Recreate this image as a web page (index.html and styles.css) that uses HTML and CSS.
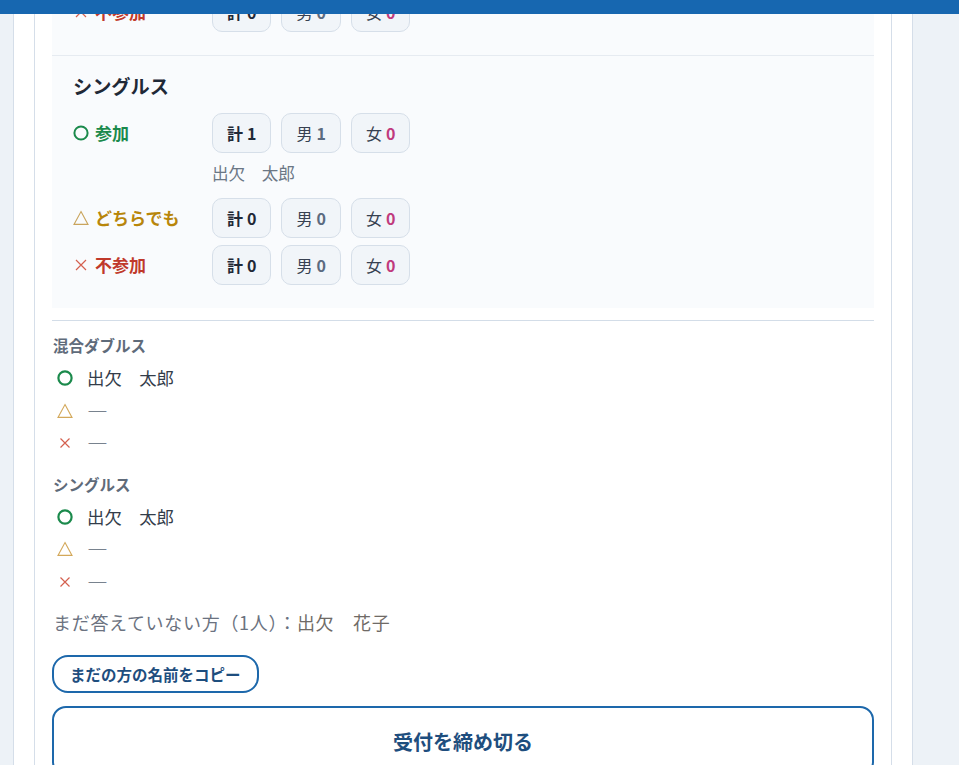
FILE: index.html
```html
<!DOCTYPE html>
<html lang="ja">
<head>
    <meta charset="UTF-8">
    <meta name="viewport" content="width=device-width, initial-scale=1.0">
    <title>出欠集計</title>
    <link rel="stylesheet" href="styles.css">
</head>
<body>
    <div class="top-bar"></div>

    <div class="page">
        <div class="card">
            <div class="tally">
                <!-- 混合ダブルス -->
                <div class="tally-section">
                    <h3 class="tally-title">混合ダブルス</h3>
                    <div class="tally-row">
                        <div class="row-label yes">
                            <svg class="mark" viewBox="0 0 16 16"><circle cx="8" cy="8" r="6.6" fill="none" stroke="currentColor" stroke-width="2"/></svg>
                            参加
                        </div>
                        <div class="row-body">
                            <div class="chips">
                                <span class="chip total">計 <b>1</b></span>
                                <span class="chip male">男 <b>1</b></span>
                                <span class="chip female">女 <b>0</b></span>
                            </div>
                            <div class="row-names">出欠　太郎</div>
                        </div>
                    </div>
                    <div class="tally-row">
                        <div class="row-label maybe">
                            <svg class="mark" viewBox="0 0 16 16"><path d="M8 1.6 L15 14.4 L1 14.4 Z" fill="none" stroke="#c9a45c" stroke-width="1.1"/></svg>
                            どちらでも
                        </div>
                        <div class="row-body">
                            <div class="chips">
                                <span class="chip total">計 <b>0</b></span>
                                <span class="chip male">男 <b>0</b></span>
                                <span class="chip female">女 <b>0</b></span>
                            </div>
                        </div>
                    </div>
                    <div class="tally-row">
                        <div class="row-label no">
                            <svg class="mark" viewBox="0 0 16 16"><path d="M3 3 L13 13 M13 3 L3 13" fill="none" stroke="#d4604f" stroke-width="1.2"/></svg>
                            不参加
                        </div>
                        <div class="row-body">
                            <div class="chips">
                                <span class="chip total">計 <b>0</b></span>
                                <span class="chip male">男 <b>0</b></span>
                                <span class="chip female">女 <b>0</b></span>
                            </div>
                        </div>
                    </div>
                </div>

                <!-- シングルス -->
                <div class="tally-section">
                    <h3 class="tally-title">シングルス</h3>
                    <div class="tally-row">
                        <div class="row-label yes">
                            <svg class="mark" viewBox="0 0 16 16"><circle cx="8" cy="8" r="6.6" fill="none" stroke="currentColor" stroke-width="2"/></svg>
                            参加
                        </div>
                        <div class="row-body">
                            <div class="chips">
                                <span class="chip total">計 <b>1</b></span>
                                <span class="chip male">男 <b>1</b></span>
                                <span class="chip female">女 <b>0</b></span>
                            </div>
                            <div class="row-names">出欠　太郎</div>
                        </div>
                    </div>
                    <div class="tally-row">
                        <div class="row-label maybe">
                            <svg class="mark" viewBox="0 0 16 16"><path d="M8 1.6 L15 14.4 L1 14.4 Z" fill="none" stroke="#c9a45c" stroke-width="1.1"/></svg>
                            どちらでも
                        </div>
                        <div class="row-body">
                            <div class="chips">
                                <span class="chip total">計 <b>0</b></span>
                                <span class="chip male">男 <b>0</b></span>
                                <span class="chip female">女 <b>0</b></span>
                            </div>
                        </div>
                    </div>
                    <div class="tally-row">
                        <div class="row-label no">
                            <svg class="mark" viewBox="0 0 16 16"><path d="M3 3 L13 13 M13 3 L3 13" fill="none" stroke="#d4604f" stroke-width="1.2"/></svg>
                            不参加
                        </div>
                        <div class="row-body">
                            <div class="chips">
                                <span class="chip total">計 <b>0</b></span>
                                <span class="chip male">男 <b>0</b></span>
                                <span class="chip female">女 <b>0</b></span>
                            </div>
                        </div>
                    </div>
                </div>
            </div>

            <hr class="divider">

            <div class="names">
                <h4 class="names-title">混合ダブルス</h4>
                <ul class="names-list">
                    <li><svg class="icon" viewBox="0 0 16 16"><circle cx="8" cy="8" r="6.6" fill="none" stroke="#1b8a4c" stroke-width="2.2"/></svg>出欠　太郎</li>
                    <li><svg class="icon" viewBox="0 0 16 16"><path d="M8 1.6 L15 14.4 L1 14.4 Z" fill="none" stroke="#d3a85a" stroke-width="1.1"/></svg><span class="none">―</span></li>
                    <li><svg class="icon" viewBox="0 0 16 16"><path d="M3.5 3.5 L12.5 12.5 M12.5 3.5 L3.5 12.5" fill="none" stroke="#d4604f" stroke-width="1.2"/></svg><span class="none">―</span></li>
                </ul>

                <h4 class="names-title">シングルス</h4>
                <ul class="names-list">
                    <li><svg class="icon" viewBox="0 0 16 16"><circle cx="8" cy="8" r="6.6" fill="none" stroke="#1b8a4c" stroke-width="2.2"/></svg>出欠　太郎</li>
                    <li><svg class="icon" viewBox="0 0 16 16"><path d="M8 1.6 L15 14.4 L1 14.4 Z" fill="none" stroke="#d3a85a" stroke-width="1.1"/></svg><span class="none">―</span></li>
                    <li><svg class="icon" viewBox="0 0 16 16"><path d="M3.5 3.5 L12.5 12.5 M12.5 3.5 L3.5 12.5" fill="none" stroke="#d4604f" stroke-width="1.2"/></svg><span class="none">―</span></li>
                </ul>

                <p class="pending">まだ答えていない方（1人）：<span class="pending-names">出欠　花子</span></p>
            </div>

            <button class="copy-button">まだの方の名前をコピー</button>
            <button class="close-button">受付を締め切る</button>
        </div>
    </div>
</body>
</html>
```

FILE: styles.css
```css
* {
    margin: 0;
    padding: 0;
    box-sizing: border-box;
}
body {
    background-color: #edf2f7;
    color: #333d4a;
    font-family: "Noto Sans CJK JP", "Noto Sans", sans-serif;
    font-size: 17.4px;
    line-height: 1.5;
}

/* fixed app header */
.top-bar {
    position: fixed;
    top: 0;
    left: 0;
    right: 0;
    height: 14px;
    background-color: #1767b0;
    z-index: 10;
}

.page {
    width: 900px;
    margin: -235px 0 0 13px;
    padding: 20px 20px 40px;
    background: white;
    border-left: 1px solid #d5dee9;
    border-right: 1px solid #d5dee9;
}
.card {
    background: white;
    border: 1px solid #d5dee9;
    padding: 17px 17px 30px;
}

/* counts per event */
.tally {
    background-color: #f9fbfd;
}
.tally-section {
    padding: 18px 21px 23px;
}
.tally-section + .tally-section {
    border-top: 1px solid #e6ebf1;
}
.tally-title {
    font-size: 19.2px;
    font-weight: 700;
    line-height: 24px;
    color: #1f2937;
    margin-bottom: 15px;
}
.tally-row {
    display: flex;
    align-items: flex-start;
}
.tally-row + .tally-row {
    margin-top: 7px;
}
.row-label {
    width: 139px;
    height: 40px;
    display: flex;
    align-items: center;
    gap: 6px;
    font-size: 17px;
    font-weight: 700;
}
.row-label.yes { color: #1b8a4c; }
.row-label.maybe { color: #b8860b; }
.row-label.no { color: #c0392b; }
.mark {
    width: 16px;
    height: 16px;
    flex-shrink: 0;
}
.chips {
    display: flex;
    gap: 10px;
}
.chip {
    height: 40px;
    display: inline-flex;
    align-items: center;
    gap: 4px;
    padding: 0 14px;
    border: 1px solid #d6dfe9;
    border-radius: 10px;
    background-color: #f1f5f9;
    font-size: 16px;
    color: #374151;
}
.chip b { font-weight: 700; }
.chip.total { font-weight: 700; color: #1f2937; }
.chip.male b { color: #5b6b80; }
.chip.female b { color: #c03b7d; }
.row-names {
    margin: 10px 0 8px 0;
    font-size: 16.6px;
    line-height: 20px;
    color: #6b7785;
}

.divider {
    border: none;
    border-top: 1px solid #d3dde8;
    margin: 12px 0 0;
}

/* name lists */
.names {
    padding-left: 1px;
}
.names-title {
    font-size: 15.5px;
    font-weight: 700;
    line-height: 20px;
    color: #5f6b7a;
    margin: 14px 0 7px;
}
.names-list + .names-title {
    margin-top: 14px;
}
.names-list {
    list-style: none;
}
.names-list li {
    height: 32.5px;
    display: flex;
    align-items: center;
    gap: 10px;
}
.names-list .none {
    display: inline-block;
    color: #5a6675;
    transform: scaleX(1.2);
    transform-origin: left center;
}
.icon {
    width: 24px;
    height: 16px;
    flex-shrink: 0;
}
.pending {
    margin-top: 12px;
    font-size: 18px;
    letter-spacing: 0.7px;
    line-height: 24px;
    color: #6b7280;
}
.pending-names {
    color: #6f6a66;
}

/* buttons */
.copy-button,
.close-button {
    display: block;
    background: white;
    border: 2px solid #1d68ab;
    color: #1e4e7e;
    font-family: inherit;
    font-weight: 700;
    cursor: pointer;
}
.copy-button {
    margin-top: 21px;
    height: 38px;
    padding: 0 16px;
    border-radius: 16px;
    font-size: 15.5px;
}
.close-button {
    margin-top: 13px;
    width: 100%;
    height: 70px;
    border-radius: 14px;
    font-size: 20px;
}
```
